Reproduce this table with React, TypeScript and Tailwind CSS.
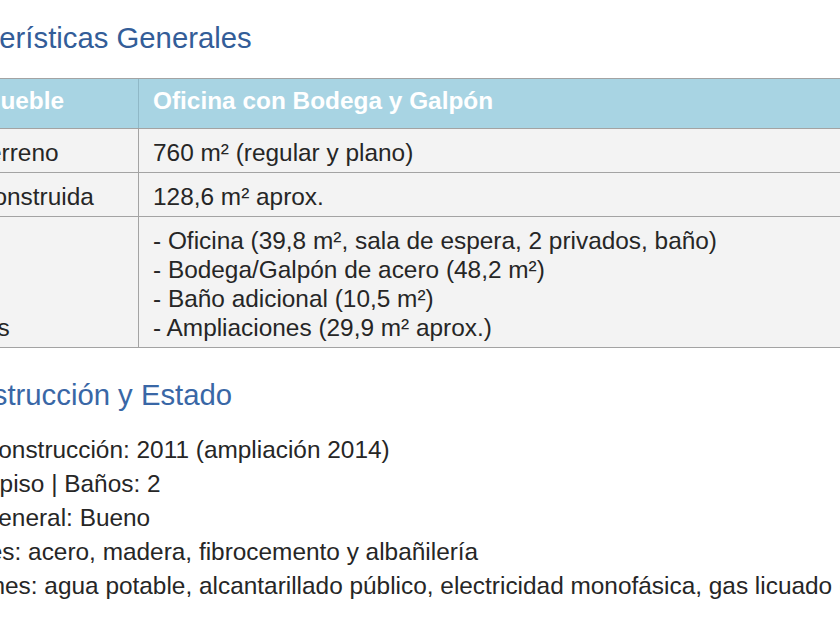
const rows = [
    { label: 'Superficie terreno', value: ['760 m² (regular y plano)'] },
    { label: 'Superficie construida', value: ['128,6 m² aprox.'] },
    {
        label: 'Edificaciones',
        value: [
            '- Oficina (39,8 m², sala de espera, 2 privados, baño)',
            '- Bodega/Galpón de acero (48,2 m²)',
            '- Baño adicional (10,5 m²)',
            '- Ampliaciones (29,9 m² aprox.)',
        ],
    },
];

const details = [
    'Año de construcción: 2011 (ampliación 2014)',
    'Altura: 1 piso | Baños: 2',
    'Estado general: Bueno',
    'Materiales: acero, madera, fibrocemento y albañilería',
    'Conexiones: agua potable, alcantarillado público, electricidad monofásica, gas licuado (GLP)',
];

const App = () => {
    return (
        <div className="h-[630px] w-[840px] overflow-hidden bg-white font-['Liberation_Sans',Arial,sans-serif] text-[#262626]">
            <h2 className="mt-[20px] ml-[-87px] whitespace-nowrap text-[29.3px] leading-[36px] font-normal text-[#335d98]">
                Características Generales
            </h2>

            <div className="mt-[22px] ml-[-148px] w-[1120px] border-t border-[#a3a3a3] text-[24.4px] leading-[29px]">
                <div className="grid grid-cols-[287px_1fr] border-b border-[#a3a3a3] bg-[#a8d4e3] font-bold text-white">
                    <div className="border-r border-[#8fb8c7] pt-[7px] pr-[14px] pb-[13px] pl-[12px] whitespace-nowrap">
                        Tipo de Inmueble
                    </div>
                    <div className="pt-[7px] pb-[13px] pl-[14px]">Oficina con Bodega y Galpón</div>
                </div>
                {rows.map((row) => (
                    <div
                        key={row.label}
                        className="grid grid-cols-[287px_1fr] border-b border-[#a3a3a3] bg-[#f3f3f3]"
                    >
                        <div className="flex items-end border-r border-[#a3a3a3] pt-[9px] pr-[14px] pb-[5px] pl-[14px] whitespace-nowrap">
                            {row.label}
                        </div>
                        <div className="flex flex-col pt-[9px] pb-[5px] pl-[14px]">
                            {row.value.map((line) => (
                                <span key={line} className="whitespace-nowrap">
                                    {line}
                                </span>
                            ))}
                        </div>
                    </div>
                ))}
            </div>

            <h2 className="mt-[29px] ml-[-61px] whitespace-nowrap text-[29.3px] leading-[36px] font-normal text-[#3967a6]">
                Construcción y Estado
            </h2>

            <div className="mt-[20px] ml-[-98px] flex flex-col text-[24.4px] leading-[34px]">
                {details.map((line) => (
                    <p key={line} className="whitespace-nowrap">
                        {line}
                    </p>
                ))}
            </div>
        </div>
    );
};

export default App;
